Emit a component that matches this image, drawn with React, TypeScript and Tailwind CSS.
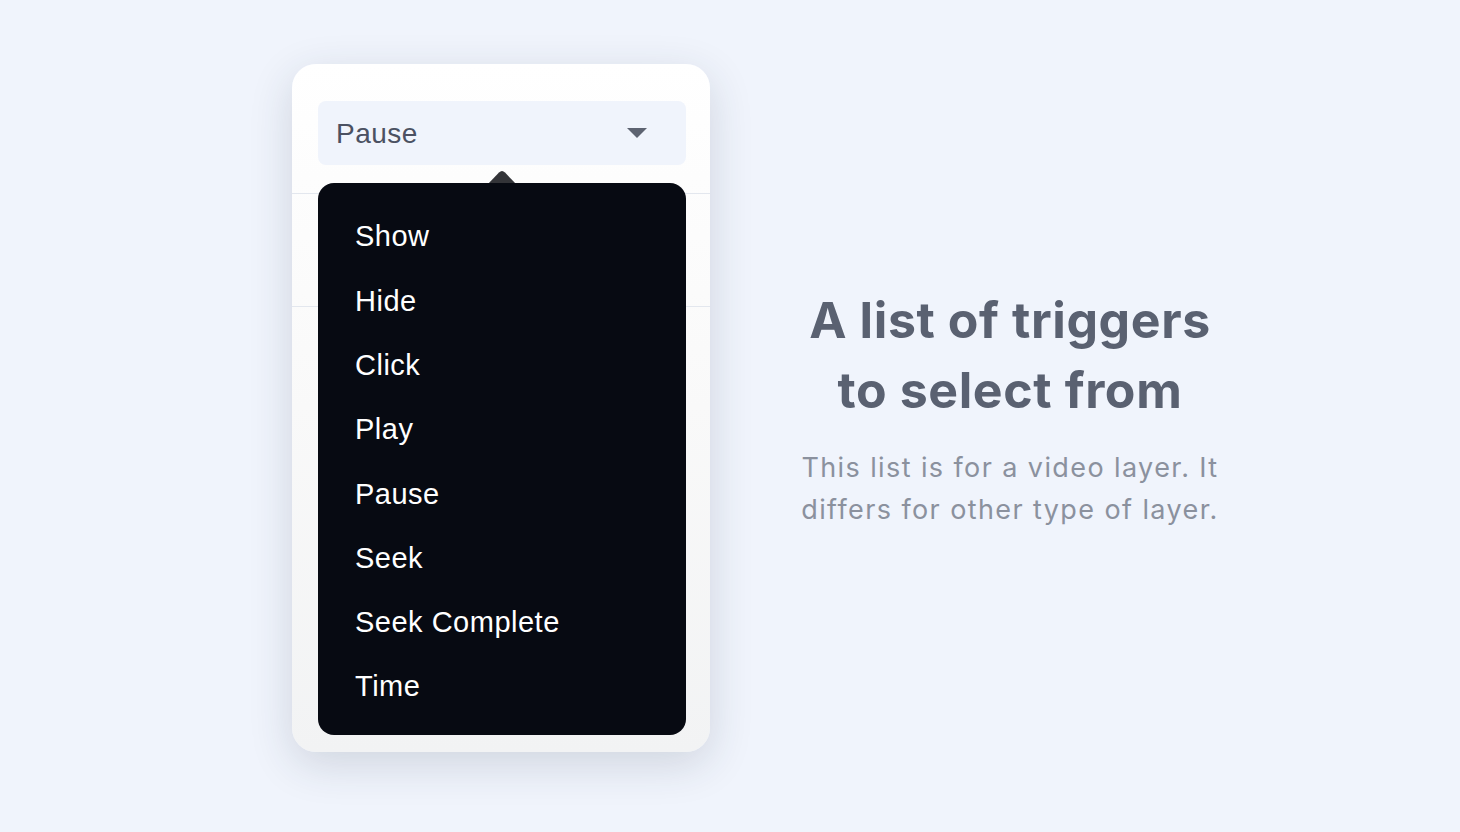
import React from 'react'

const triggers = ['Show', 'Hide', 'Click', 'Play', 'Pause', 'Seek', 'Seek Complete', 'Time']

function TriggerCard() {
  return (
    <div className="relative w-[418px] h-[688px] shrink-0 rounded-[24px] bg-linear-to-b from-white via-[#f9f9f9] to-[#f2f3f4] shadow-[0_12px_44px_rgba(40,48,70,0.16)]">
      <div className="pt-[37px] pl-[26px] pr-[24px]">
        <div className="flex items-center justify-between h-[64px] rounded-[8px] bg-[#f0f4fc] pl-[18px] pr-[38px]">
          <span className="pt-[1px] text-[28px] tracking-[0.5px] text-[#4b5162] font-['Liberation_Sans',Arial,sans-serif]">
            Pause
          </span>
          <svg width="22" height="12" viewBox="0 0 22 12">
            <path d="M1 1h20l-10 10z" fill="#5d6371" />
          </svg>
        </div>
      </div>
      <div className="mt-[28px] border-t border-[#e3e7ee]" />
      <div className="h-[112px]" />
      <div className="border-t border-[#e3e7ee]" />

      {/* open menu */}
      <svg className="absolute left-[193px] top-[105px]" width="34" height="16" viewBox="0 0 34 16">
        <path d="M2 16 L14 3.5 Q17 0.5 20 3.5 L32 16 Z" fill="#333438" />
      </svg>
      <ul className="absolute left-[26px] top-[119px] w-[368px] rounded-[16px] bg-[#070a12] pt-[22px] pb-[16px]">
        {triggers.map((t) => (
          <li
            key={t}
            className="flex items-center h-[64.3px] pl-[37px] text-[29px] tracking-[0.5px] text-white font-['Liberation_Sans',Arial,sans-serif]"
          >
            {t}
          </li>
        ))}
      </ul>
    </div>
  )
}

export default function App() {
  return (
    <div className="w-full h-[832px] bg-[#f0f4fc] flex items-center pl-[292px] pb-[16px]">
      <TriggerCard />
      <div className="ml-[60px] w-[480px] flex flex-col items-center text-center font-['Inter',sans-serif]">
        <h1 className="text-[50px] leading-[70px] font-bold tracking-[0.6px] text-[#5a6171]">
          A list of triggers
          <br />
          to select from
        </h1>
        <p className="mt-[22px] text-[27px] leading-[42px] tracking-[1.4px] text-[#8b919e]">
          This list is for a video layer. It
          <br />
          differs for other type of layer.
        </p>
      </div>
    </div>
  )
}
